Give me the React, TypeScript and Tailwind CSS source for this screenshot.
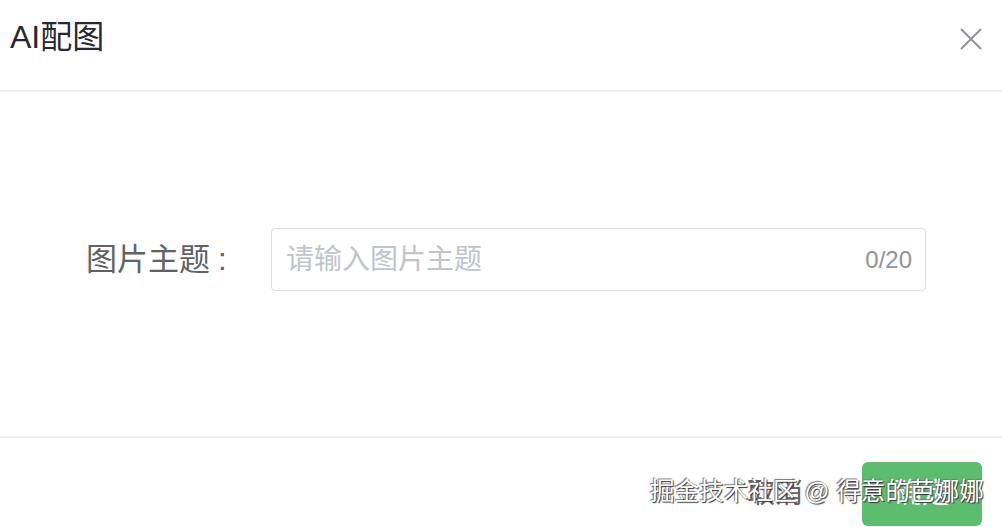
import React from 'react';

export default function App() {
  return (
    <div className="relative w-[1002px] h-[527px] bg-white flex flex-col overflow-hidden font-['Liberation_Sans','Noto_Sans_CJK_SC',sans-serif]">
      {/* header */}
      <div className="h-[92px] shrink-0 flex items-start justify-between pl-[10px] pr-[20px] border-b-2 border-[#ebeef5]">
        <h2 className="pt-[21px] text-[32px] leading-none text-[#262833]">AI配图</h2>
        <button className="mt-[28px] w-[22px] h-[22px] text-[#909399]" aria-label="关闭">
          <svg viewBox="0 0 22 22" className="w-[22px] h-[22px]" fill="none" stroke="currentColor" strokeWidth="2">
            <path d="M1 1L21 21M21 1L1 21" />
          </svg>
        </button>
      </div>

      {/* body */}
      <div className="h-[344px] shrink-0 pt-[136px] pl-[86px]">
        <div className="flex items-center">
          <label className="w-[185px] text-[31px] leading-none text-[#606266]">
            图片主题<span className="ml-[8px]">:</span>
          </label>
          <div className="w-[655px] h-[63px] flex items-center justify-between border border-[#dcdfe6] rounded-[4px] pl-[14px] pr-[13px]">
            <span className="text-[28px] leading-none text-[#c0c4cc]">请输入图片主题</span>
            <span className="text-[24px] leading-none text-[#909399]">0/20</span>
          </div>
        </div>
      </div>

      {/* footer */}
      <div className="flex-1 border-t-2 border-[#ebeef5] flex justify-end gap-[27px] pt-[24px] pr-[20px]">
        <button className="w-[120px] h-[64px] text-[28px] text-[#606266] bg-white rounded-[6px]">取消</button>
        <button className="w-[120px] h-[64px] text-[28px] text-white bg-[#5cbd6f] rounded-[6px]">确定</button>
      </div>

      {/* watermark */}
      <div className="absolute left-[650px] top-[480px] text-[24.6px] leading-none text-white whitespace-nowrap [text-shadow:1px_1px_1px_#333,-1px_-1px_1px_#777]">
        掘金技术社区 @ 得意的芭娜娜
      </div>
    </div>
  );
}
